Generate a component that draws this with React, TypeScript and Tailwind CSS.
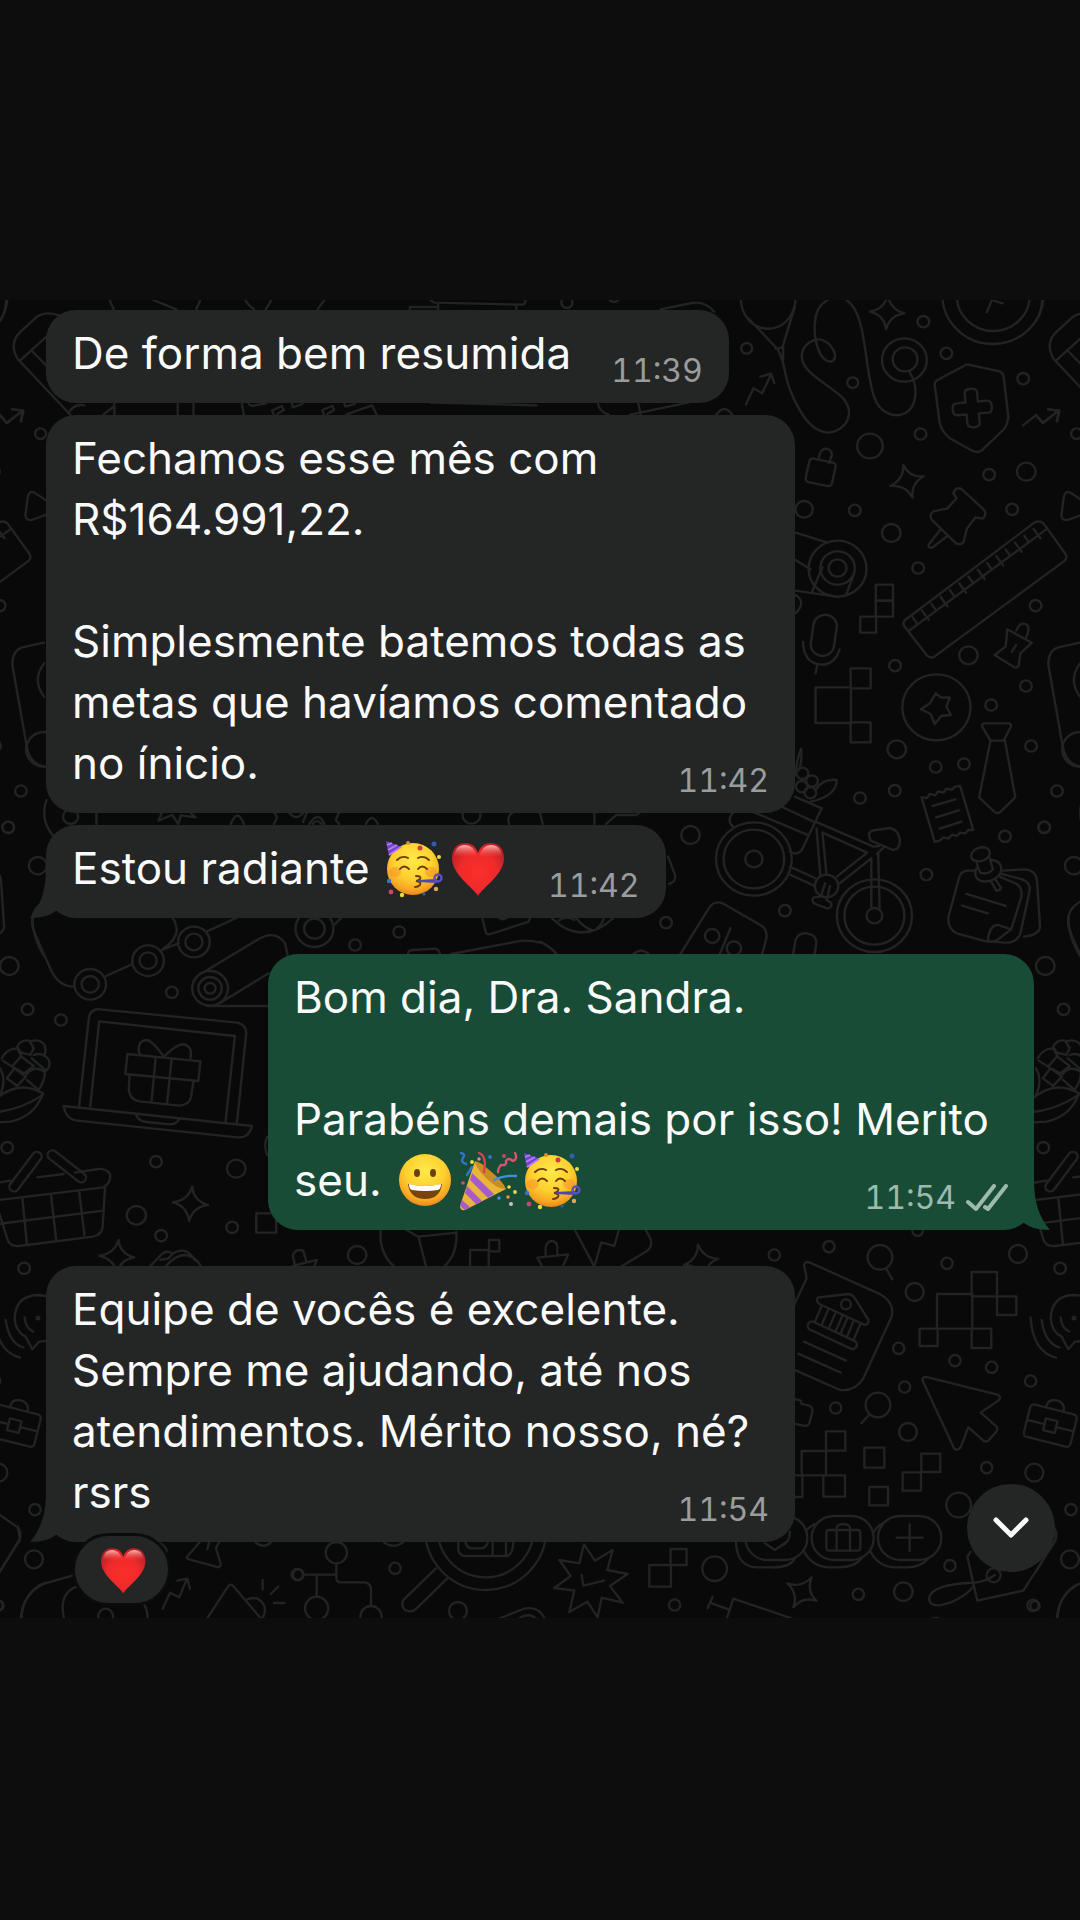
import React, { useId } from "react";

type Circle = [number, number, number];
type Box = [number, number, number, number];

/* ---------- wallpaper ---------- */

function Sparkle({ points }: { points: [number, number][] }) {
  const cx = points.reduce((s, p) => s + p[0], 0) / 4;
  const cy = points.reduce((s, p) => s + p[1], 0) / 4;
  const d = points
    .map((p, i) => {
      const n = points[(i + 1) % 4];
      const mx = ((p[0] + n[0]) / 2 + cx * 2) / 3;
      const my = ((p[1] + n[1]) / 2 + cy * 2) / 3;
      return (i === 0 ? `M${p[0]} ${p[1]} ` : "") + `Q${mx} ${my} ${n[0]} ${n[1]}`;
    })
    .join(" ");
  return <path d={d + "Z"} />;
}

function Patch({
  at,
  scale,
  circles = [],
  boxes = [],
  paths = [],
  children,
}: {
  at: string;
  scale: string;
  circles?: Circle[];
  boxes?: Box[];
  paths?: string[];
  children?: React.ReactNode;
}) {
  return (
    <g transform={`translate(${at}) scale(${scale})`}>
      {circles.map(([x, y, r], i) => (
        <circle key={i} cx={x} cy={y} r={r} />
      ))}
      {boxes.map(([x, y, w, h], i) => (
        <rect key={i} x={x} y={y} width={w} height={h} />
      ))}
      {paths.map((d, i) => (
        <path key={i} d={d} />
      ))}
      {children}
    </g>
  );
}

const WIDE = "0.3444 0.3333";
const NORMAL = "0.3333 0.3333";

function Doodles() {
  const ticks = Array.from({ length: 14 }, (_, i) => {
    const x = 1082 + i * 27;
    const y = 1012 - i * 20.4;
    return `M${x} ${y} l${i % 2 ? 20 : 13} ${i % 2 ? 28 : 19}`;
  });
  return (
    <g id="doodles">
      {/* eraser, keyboard, play button */}
      <Patch
        at="0 280"
        scale={WIDE}
        paths={[
          "M18 60 Q16 100 0 122",
          "M52 238 Q24 190 60 155 L105 112 Q130 92 172 106 M52 238 L205 405 M58 242 L140 165 M90 210 L140 262",
          "M318 60 L330 88 M445 60 L512 88 M582 60 L570 88 M712 60 Q722 78 738 88 M788 60 L772 88 M942 60 L922 88",
          "M1190 88 V81 H1270 M1250 60 L1262 68 L1515 74 Q1526 74 1526 60 M1272 70 V88 M1498 76 L1500 88",
          "M198 400 Q215 370 245 376 M300 404 L332 378 M332 370 V404 M516 370 V404 M562 370 V404 M702 370 L708 404",
          "M722 370 Q726 380 740 376 L772 370 M795 404 L790 392 L818 378 L824 390 L805 402 M848 370 L850 382 L878 372 M940 404 L936 390 L965 378 L970 390 L950 402 M1000 372 L1003 380 L1030 372",
          "M1005 404 L1080 376 L1094 404 M1250 368 L1558 376",
          "M0 404 L20 428 L66 392 M36 388 L68 392 L62 424",
          "M135 662 L100 638 Q84 630 80 655 L74 705 Q74 722 92 720 L135 704",
        ]}
      />
      {/* stethoscope, clock, shield, pushpin, ruler */}
      <Patch
        at="540 280"
        scale={WIDE}
        circles={[
          [78, 68, 16], [215, 50, 16], [600, 205, 16], [1113, 125, 17], [1180, 220, 17], [908, 308, 16],
          [1403, 296, 17], [1105, 462, 17], [958, 498, 37], [1304, 584, 17], [1412, 575, 27], [767, 688, 25],
          [914, 691, 17], [1371, 688, 17], [1020, 759, 27], [1098, 864, 17], [1439, 977, 17], [1558, 461, 16],
          [1058, 240, 65], [1060, 238, 36], [1315, 45, 147], [1316, 47, 106], [864, 866, 84], [864, 864, 50],
          [864, 864, 26],
        ]}
        boxes={[[975, 914, 50, 48], [975, 962, 50, 48], [930, 1010, 46, 48]]}
        paths={[
          "M350 88 L440 69 Q480 62 505 95 M168 370 Q172 395 200 404 M285 368 L292 402 M262 404 L430 368 M512 404 Q535 370 558 404",
          "M598 373 L620 325 L645 340 L670 285 M640 290 L671 281 L680 309",
          "M583 60 C590 170 730 180 742 60 M605 115 L690 208 M740 80 L706 195 V240 M683 205 Q697 208 706 198",
          "M690 208 C720 260 700 300 760 400 C790 450 830 470 865 450 C905 425 905 385 880 355 C850 320 760 280 760 230 C760 190 800 170 825 182 C850 195 870 235 845 245 C810 245 795 180 798 130 Q800 80 835 60 M890 60 C950 100 940 260 970 350 C985 400 1030 415 1060 400 C1095 380 1100 320 1073 276",
          "M1297 97 L1312 60 L1343 70",
          "M1244 254 L1335 274 Q1345 280 1346 290 L1360 410 Q1358 435 1345 450 L1282 512 Q1270 520 1255 512 L1190 475 Q1165 455 1160 425 L1146 315 Q1146 302 1158 298 L1232 257 Q1240 252 1244 254",
          "M1402 436 L1440 406 L1460 430 L1506 392 M1475 388 L1507 392 L1500 424",
          "M808 540 L812 522 Q820 503 835 507 Q850 512 847 527 L840 549",
          "M1200 640 Q1208 618 1225 628 L1290 690 Q1298 705 1285 716 L1265 712 L1240 745 L1230 785 Q1222 798 1208 790 L1138 720 Q1128 705 1142 694 L1182 686 L1210 655 Z",
          "M1163 748 L1128 795 Q1128 806 1140 802 L1183 768",
          "M1060 1020 Q1050 1030 1060 1042 L1125 1128 Q1135 1136 1145 1130 L1524 842 Q1532 832 1526 822 L1462 730 Q1450 720 1435 728 Z M1072 1052 L1470 748",
          "M742 758 L835 788 M742 840 L785 868 M742 932 L865 951 M820 862 L790 935 M912 880 L890 942 M742 945 Q775 965 742 1000",
          ...ticks,
        ]}
      >
        <Sparkle points={[[1010, 45], [1058, 100], [1005, 148], [958, 95]]} />
        <Sparkle points={[[1055, 555], [1114, 589], [1082, 653], [1017, 618]]} />
        <rect x="776" y="541" width="78" height="72" rx="10" transform="rotate(12 815 577)" />
        <path
          transform="translate(1255 384) rotate(-5)"
          d="M-18 -45 Q-18 -58 0 -58 Q18 -58 18 -45 V-18 H45 Q57 -18 57 0 Q57 18 45 18 H18 V45 Q18 58 0 58 Q-18 58 -18 45 V18 H-45 Q-57 18 -57 0 Q-57 -18 -45 -18 H-18 Z"
        />
      </Patch>
      {/* bicycle, tie, receipt, sticky notes */}
      <Patch
        at="540 600"
        scale={WIDE}
        circles={[
          [1244, 166, 27], [1031, 197, 17], [1411, 258, 17], [1310, 315, 17], [1036, 448, 27], [1426, 438, 17],
          [1149, 501, 17], [1231, 492, 17], [929, 594, 17], [1030, 572, 17], [1501, 573, 17], [1464, 682, 17],
          [1350, 709, 17], [437, 705, 27], [1122, 824, 17], [1550, 797, 26], [711, 932, 17], [366, 968, 17],
          [1151, 322, 99], [1568, 448, 52], [621, 777, 110], [621, 777, 88], [621, 777, 25], [971, 947, 109],
          [971, 947, 87], [971, 947, 23], [832, 858, 34], [762, 520, 17], [790, 543, 17], [760, 560, 17],
          [785, 578, 17], [500, 1008, 21], [563, 1045, 21],
        ]}
        boxes={[[902, 205, 58, 60], [800, 262, 103, 107], [902, 367, 58, 60]]}
        paths={[
          "M764 126 Q765 188 815 194 Q855 195 870 148 M805 195 L800 220",
          "M1357 88 L1428 128 L1395 160 L1390 198 Q1385 206 1375 200 L1320 165 L1352 140 Z M1383 92 Q1392 66 1410 72 Q1426 80 1412 112 M1370 155 L1382 136",
          "M1149 280 L1165 293 L1190 292 L1180 320 L1193 345 L1165 348 L1146 372 L1134 342 L1106 328 L1132 310 Z",
          "M1290 370 H1362 Q1370 372 1367 380 L1346 422 H1308 L1284 380 Q1282 372 1290 370 Z M1308 422 L1275 592 L1320 636 Q1328 642 1336 636 L1380 592 L1350 422",
          "M1568 128 L1505 142 Q1475 152 1476 195 L1518 440 Q1525 490 1568 500 M1568 190 Q1532 240 1568 290",
          "M1108 592 L1124 594 L1132 582 L1148 586 L1156 574 L1172 578 L1180 566 L1196 570 L1204 560 L1220 558 L1258 690 L1244 690 L1234 700 L1220 698 L1210 708 L1196 704 L1186 716 L1172 712 L1160 722 L1146 726 Z M1140 618 L1206 598 M1150 652 L1216 631 M1160 686 L1224 665",
          "M1262 812 H1240 Q1222 815 1218 830 L1186 950 Q1182 985 1210 1000 L1295 1024 Q1320 1028 1330 1018 L1368 988 L1398 890 Q1402 855 1370 846 L1335 830",
          "M1340 822 L1390 835 Q1430 845 1420 880 L1395 1000 Q1385 1030 1350 1028 L1300 1024 M1345 812 L1410 808 Q1440 812 1443 840 L1452 980 Q1450 1005 1405 1010 M1300 1022 Q1305 975 1330 975 Q1345 980 1368 988 M1238 882 L1352 918 M1226 917 L1300 940",
          "M1268 790 L1278 818 Q1300 826 1315 808 L1305 772 M1268 804 Q1255 835 1285 844 Q1320 848 1338 818 Q1345 785 1312 780 M1310 845 L1325 872 Q1338 872 1338 862 L1322 838",
          "M600 628 L780 706 M705 622 L800 668 M740 590 L818 625 L760 750 Q745 768 725 755 M562 636 Q540 660 560 680",
          "M800 665 L968 740 M820 698 L950 758 L862 830 M820 698 L832 825 M803 685 L814 828 M870 850 L962 775 M725 800 L800 835 M728 825 L798 858 M962 775 V925 M982 760 L986 925 M968 740 L985 738 M1000 740 L978 762",
          "M955 705 Q955 692 975 690 L1015 684 Q1040 688 1045 720 Q1045 750 1025 750 L960 722 Z",
          "M828 850 L815 890 L795 892 Q785 905 800 912 L835 926 Q850 922 845 908 L832 900 L842 858",
          "M800 570 Q820 535 862 540 Q860 590 785 605 M742 525 Q745 480 758 446 Q762 480 752 510",
          "M372 770 L392 825 Q396 845 375 852 M35 955 Q120 1040 212 955 M105 955 Q130 985 150 990 M55 962 Q75 945 100 960 M185 955 Q180 975 165 985",
          "M408 1062 L490 925 Q505 900 530 910 L640 975 Q665 990 655 1025 L645 1062 M553 985 L522 1062",
          "M735 1062 L742 1020 Q750 998 775 1000 Q805 1005 802 1030 L798 1062 M272 1062 Q293 1042 315 1062 M0 1025 Q30 1040 48 1062",
          "M1568 905 Q1525 930 1535 980 Q1545 1030 1568 1068 M158 636 V672 M0 640 L8 672 M192 672 L222 645 H280 L292 636",
        ]}
      >
        <rect x="790" y="44" width="68" height="124" rx="34" transform="rotate(8 824 106)" />
        <ellipse cx="1279" cy="763" rx="28" ry="20" transform="rotate(-20 1279 763)" />
      </Patch>
      {/* skateboard, laptop with gift, corn */}
      <Patch
        at="0 800"
        scale={WIDE}
        circles={[
          [205, 50, 22], [24, 82, 17], [27, 498, 27], [80, 628, 17], [177, 660, 17], [499, 577, 17],
          [1031, 435, 17], [1159, 396, 17], [21, 1043, 17], [262, 553, 46], [262, 553, 25], [430, 482, 46],
          [430, 482, 25], [563, 426, 46], [563, 426, 25], [913, 386, 55], [913, 386, 30], [610, 565, 52],
          [610, 565, 34], [610, 565, 16], [1369, 45, 26],
        ]}
        paths={[
          "M135 0 Q115 60 155 108 M280 36 V72 M470 38 L460 62 L500 45 L518 72 L525 46 L568 52 L552 38",
          "M670 72 Q690 22 708 72 M795 36 L805 52 L795 72 M840 38 Q860 64 880 38 M898 72 Q925 30 942 72 M908 72 Q920 55 934 72 M890 40 L880 66 M985 36 L975 60 L985 72 M1062 72 Q1080 36 1097 72 M1478 72 Q1470 50 1490 36",
          "M95 352 Q92 380 105 410 L148 510 Q170 560 216 560 M308 528 L385 492 M470 450 L518 430 M470 450 Q520 415 512 380 Q510 365 500 352 M600 395 L690 352 M970 375 L992 352",
          "M596 514 L755 415 Q800 390 828 430 L835 465 M640 608 L780 520 M600 618 H776",
          "M1400 352 L1410 395 Q1412 405 1425 402 L1535 365 L1540 352 M1445 352 L1460 358 L1475 352 M1185 460 Q1185 452 1200 450 L1265 446 Q1275 450 1277 460 M1310 462 L1500 425 Q1530 418 1568 428",
          "M230 918 L258 655 Q262 625 290 628 L690 668 Q715 675 715 700 L688 968 M262 920 L288 664 L682 708 L655 964",
          "M185 918 L732 978 Q722 1015 690 1012 L225 962 Q190 958 185 918 Z M395 945 Q405 965 425 966 L495 973 Q512 972 520 958",
          "M370 762 L582 784 L576 843 L364 822 Z M452 772 L440 905 M498 778 L485 912 M376 824 L374 870 Q378 900 405 904 L520 917 Q550 915 555 890 L562 842",
          "M476 770 Q440 720 425 720 Q400 722 403 755 L408 765 M476 770 Q515 730 535 733 Q560 740 553 775",
          "M50 740 Q60 718 85 722 L98 745 L88 765 L60 758 Z M88 725 Q110 715 128 732 Q136 750 128 768 M5 775 Q20 745 50 745 L62 768 L35 800 L8 782 M98 765 Q125 755 142 780 Q148 800 134 812 L92 775 M62 770 L98 798 L70 820 L35 800 M42 805 L75 830 L50 858 L20 835 Z M78 822 Q98 795 130 815 Q132 840 112 870 L78 840",
          "M-20 905 Q50 835 125 880 Q100 950 30 965 L-20 968 M-20 938 Q60 930 125 884 M0 805 Q20 840 0 885",
        ]}
      />
      {/* shopping basket */}
      <Patch
        at="0 1120"
        scale={WIDE}
        circles={[[453, 125, 17], [686, 146, 27], [396, 286, 28], [468, 347, 17], [674, 322, 17], [70, 445, 17], [1037, 405, 27]]}
        boxes={[[744, 280, 58, 58], [1365, 390, 54, 60], [1420, 360, 30, 34]]}
        paths={[
          "M-10 241 L300 202 Q322 190 320 165 Q312 145 285 147 L218 158 M108 172 L185 162 M-10 189 L30 182",
          "M305 202 L298 320 Q296 345 270 350 L55 378 Q30 380 22 360 L-5 270 M65 235 L78 370 M148 225 L163 358 M230 215 L245 345 M-5 312 L300 272",
          "M435 440 L470 402 Q485 390 500 400 L490 415 L465 420 M480 440 Q540 370 585 440 M500 402 Q540 375 565 420",
          "M855 430 L850 405 Q860 385 880 392 L890 425 M850 438 L920 420 L912 440",
          "M1105 330 Q1100 400 1145 440 M1325 335 Q1330 400 1290 440 M1215 350 L1325 338 M1215 350 L1180 330 M1215 350 L1237 440 M776 50 Q764 75 776 105",
        ]}
      >
        <rect x="-14" y="-70" width="28" height="140" rx="14" transform="translate(74 155) rotate(36)" />
        <rect x="-14" y="-68" width="28" height="136" rx="14" transform="translate(194 139) rotate(-51)" />
        <Sparkle points={[[558, 200], [604, 255], [549, 303], [502, 247]]} />
        <Sparkle points={[[344, 360], [390, 412], [340, 460], [288, 407]]} />
      </Patch>
      <Patch
        at="400 1215"
        scale={NORMAL}
        circles={[[1123, 120, 17]]}
        paths={[
          "M437 122 V98 Q440 78 456 78 Q472 80 472 98 V120 M412 128 L505 118 L486 160 M412 128 L430 160",
          "M522 40 L583 155 L604 82 L643 93 L658 40 M735 40 L752 72 Q760 98 735 112 L655 160",
        ]}
      >
        <Sparkle points={[[894, 88], [955, 131], [915, 190], [852, 150]]} />
      </Patch>
      {/* bank card, pixels, cursor, briefcase */}
      <Patch
        at="780 1140"
        scale={NORMAL}
        circles={[
          [147, 320, 17], [413, 272, 16], [300, 352, 37], [501, 370, 17], [404, 456, 27], [714, 342, 27],
          [356, 625, 17], [525, 662, 17], [635, 682, 17], [752, 723, 17], [374, 741, 17], [167, 804, 17],
          [294, 795, 37], [384, 876, 27], [198, 493, 15], [882, 534, 4],
        ]}
        boxes={[[471, 462, 106, 104], [575, 396, 76, 73], [651, 469, 58, 56], [419, 566, 54, 52], [575, 566, 59, 58]]}
        paths={[
          "M318 385 L337 418 M268 824 L244 850",
          "M40 500 L80 415 L72 375 Q75 362 90 368 L295 460 Q345 485 335 530 L250 715 Q225 755 180 750 L40 688",
          "M115 472 L205 462 Q215 462 225 475 L265 540 Q268 552 255 555 L118 492 Q105 482 115 472Z",
          "M125 498 L105 545 M145 508 L125 555 M168 515 L148 562 M188 525 L168 572 M203 532 L182 580 M222 540 L202 588 M242 550 L222 597",
          "M72 605 L198 662 M55 641 L182 698",
          "M438 711 L655 765 Q665 772 655 782 L602 818 L650 860 Q655 868 648 876 L625 902 Q615 908 608 900 L565 862 L542 922 Q532 935 522 925 L428 722 Q426 710 438 711 Z",
          "M752 532 Q758 635 828 653 M785 540 Q795 610 838 622 M842 532 Q845 565 868 575 M945 500 Q925 465 880 465 Q815 468 812 535 Q815 575 845 590 L865 628 L885 605 L920 602",
          "M40 776 L62 782 L65 792 L90 798 Q98 802 97 815 L88 850 Q82 860 70 857 L40 850",
        ]}
      >
        <rect x="-80" y="-13" width="160" height="26" rx="13" transform="translate(157 586) rotate(25)" />
        <g transform="translate(811 857) rotate(14)">
          <rect x="-72" y="-50" width="144" height="100" rx="12" />
          <path d="M-26 -50 Q-26 -78 0 -78 Q28 -78 28 -50 M-72 0 H-18 M18 0 H72" />
          <rect x="-18" y="-18" width="36" height="36" />
        </g>
      </Patch>
      {/* option pills, price tag */}
      <Patch
        at="780 1380"
        scale={NORMAL}
        circles={[
          [620, 263, 17], [763, 278, 27], [536, 375, 37], [873, 389, 17], [870, 538, 27], [510, 557, 17],
          [235, 643, 17], [370, 635, 28], [759, 676, 17], [641, 586, 21],
        ]}
        boxes={[
          [65, 213, 73, 73], [138, 154, 58, 58], [130, 286, 65, 64], [20, 286, 47, 65], [253, 203, 60, 60],
          [268, 321, 56, 55], [368, 277, 55, 55], [424, 221, 57, 55],
        ]}
        paths={[
          "M272 515 Q295 562 350 562 H380 Q425 562 445 535 M282 455 Q295 435 308 430 M70 510 Q95 562 150 562 H175 Q225 562 245 535 M80 450 Q90 440 104 432 M-20 562 Q30 562 45 535",
          "M350 473 H428 M389 433 V513 M170 512 V450 Q168 432 190 432 Q212 432 210 450 V512 M0 500 Q30 490 30 455",
          "M572 515 L562 530 L592 662 L730 632 L828 480 L822 440 M645 585 C600 620 560 600 490 620 C430 640 440 680 480 676 C520 670 560 645 580 620",
          "M830 720 Q835 640 905 608 M450 720 Q468 708 486 720",
        ]}
      >
        <rect x="294" y="408" width="190" height="132" rx="66" />
        <rect x="95" y="408" width="186" height="132" rx="66" />
        <rect x="-104" y="408" width="186" height="132" rx="66" />
        <rect x="139" y="450" width="102" height="62" rx="8" />
        <Sparkle points={[[95, 592], [110, 663], [40, 682], [22, 610]]} />
      </Patch>
      <Patch
        at="0 1480"
        scale={NORMAL}
        circles={[[-3, 377, 14], [317, 408, 22], [892, 284, 17]]}
        paths={[
          "M0 105 L50 140 Q65 150 60 175 L0 275 M65 416 Q65 350 120 315 L225 285 M192 416 Q175 340 230 320 M432 372 Q445 395 442 416",
          "M488 386 L510 338 L538 352 L560 298 M532 302 L562 296 L570 326 M600 185 L560 232 Q562 238 568 238 L655 262 Q662 260 662 250 L648 205 L658 185 M622 208 L628 185",
          "M620 418 L685 318 Q692 310 700 318 L785 418 M742 358 Q775 345 792 375 Q800 400 785 418 M788 300 V328 M835 320 L812 342 M822 369 H854 M765 185 Q790 210 815 185 M480 190 Q500 200 500 215",
        ]}
      />
      {/* org chart, magnifier, burst */}
      <Patch
        at="300 1500"
        scale={NORMAL}
        circles={[
          [109, 158, 32], [50, 325, 35], [213, 350, 32], [285, 205, 17], [-5, 224, 16], [474, 333, 27],
          [1244, 206, 37], [1124, 315, 17], [557, 88, 182], [557, 88, 144],
        ]}
        boxes={[[1048, 195, 65, 65], [1112, 147, 48, 48]]}
        paths={[
          "M109 190 V235 Q110 247 122 247 H195 Q213 250 213 270 V318 M12 224 H109 M50 228 V290 M250 125 Q280 150 312 125",
          "M408 205 L312 298 Q300 315 315 330 Q335 340 350 325 L442 235 M475 120 V150 Q478 168 498 168 H620 Q640 165 640 120 M578 120 V168 M618 120 V168 M495 120 Q498 145 515 145 H545 Q562 142 565 120",
          "M595 357 L670 327 Q715 315 735 357 M655 357 Q685 335 710 357",
          "M852 133 L885 182 L938 150 L922 210 L983 222 L930 258 L968 308 L905 293 L893 352 L862 305 L808 336 L823 272 L763 264 L812 228 L778 180 L838 190 Z M845 225 L850 257 L912 242",
          "M1308 125 Q1310 202 1375 202 H1430 M1395 130 L1425 150 L1460 125 M1238 290 L1223 325 M1230 308 L1285 328 M1280 357 L1300 296 L1475 355",
        ]}
      />
    </g>
  );
}

function Wallpaper() {
  return (
    <svg
      aria-hidden="true"
      className="absolute inset-0 h-full w-full"
      viewBox="0 300 1080 1319"
      preserveAspectRatio="xMidYMin slice"
      fill="none"
      stroke="#222323"
      strokeWidth="7"
      strokeLinecap="round"
      strokeLinejoin="round"
    >
      <Doodles />
      <use href="#doodles" x="-1036" />
      <use href="#doodles" x="1036" />
    </svg>
  );
}

/* ---------- emoji ---------- */

const EMOJI = "inline-block h-[61px] w-[63px] align-top";

function FaceGradient({ id }: { id: string }) {
  return (
    <radialGradient id={id} cx="0.5" cy="0.32" r="0.68">
      <stop offset="0" stopColor="#ffe94a" />
      <stop offset="0.55" stopColor="#fdd02f" />
      <stop offset="0.85" stopColor="#f7a823" />
      <stop offset="1" stopColor="#e8861c" />
    </radialGradient>
  );
}

function PartyFace() {
  const id = useId();
  return (
    <svg role="img" aria-label="🥳" viewBox="0 0 63 61" className={EMOJI}>
      <defs>
        <FaceGradient id={id} />
      </defs>
      <circle cx="31" cy="31" r="26" fill={`url(#${id})`} />
      <ellipse cx="13" cy="34" rx="6" ry="5" fill="#f58a2a" opacity="0.45" />
      <ellipse cx="49" cy="34" rx="6" ry="5" fill="#f58a2a" opacity="0.45" />
      <path d="M4 3 L20 9 Q12 12 7 18 Z" fill="#6d45d8" />
      <path d="M5 7 L10 5 M6 12 L15 7 M7 17 L19 9" stroke="#c37bea" strokeWidth="1.8" />
      <g fill="none" stroke="#6b3a0c" strokeWidth="1.9" strokeLinecap="round">
        <path d="M15 22 Q20 17 26 20" />
        <path d="M36 20 Q42 17 47 22" />
        <path d="M18 31 Q22 26 27 31" />
        <path d="M36 31 Q40 26 45 31" />
        <path d="M34 38 Q40 38 38 41 Q36 43 34 43 Q40 44 38 47 Q36 49 33 49" />
      </g>
      <path d="M36 42 L55 41 V45 L36 44 Z" fill="#4d46b5" />
      <circle cx="56" cy="40" r="3.5" fill="none" stroke="#5a4fc4" strokeWidth="2.4" />
      <circle cx="38" cy="10" r="2.5" fill="#d33a3e" />
      <circle cx="52" cy="6" r="2.5" fill="#2f5fae" />
      <circle cx="26" cy="5" r="1.9" fill="#e58b2c" />
      <circle cx="57" cy="19" r="2" fill="#e8e04a" />
      <circle cx="7" cy="43" r="2.2" fill="#3572c8" />
      <circle cx="9" cy="54" r="2.4" fill="#c9456f" />
      <circle cx="20" cy="57" r="2.2" fill="#e6dc3f" />
      <circle cx="54" cy="51" r="2.2" fill="#e5a65a" />
      <circle cx="42" cy="56" r="1.5" fill="#3b5aa8" />
    </svg>
  );
}

function GrinFace() {
  const id = useId();
  return (
    <svg role="img" aria-label="😀" viewBox="0 0 63 61" className={EMOJI}>
      <defs>
        <FaceGradient id={id} />
      </defs>
      <circle cx="31" cy="30" r="26" fill={`url(#${id})`} />
      <ellipse cx="23" cy="23" rx="3" ry="4" fill="#6b3f10" />
      <ellipse cx="39" cy="23" rx="3" ry="4" fill="#6b3f10" />
      <path d="M14 34 Q31 38 48 34 Q46 49 31 49 Q16 49 14 34 Z" fill="#7a430d" />
      <path d="M15 34 Q31 38 47 34 Q47 39 44 40 Q31 42 18 40 Q15 39 15 34 Z" fill="#ffffff" />
    </svg>
  );
}

function PartyPopper() {
  return (
    <svg role="img" aria-label="🎉" viewBox="0 0 63 61" className={EMOJI}>
      <path d="M18 11 L49 39 L8 60 Q3 61 3 56 Z" fill="#e9b53a" />
      <path d="M18 11 Q24 12 31 19 Q46 31 49 39 Q41 40 28 27 Q18 17 18 11 Z" fill="#c98d20" />
      <path d="M15 23 L37 44 L31 48 L13 30 Z M10 36 L25 51 L19 54 L8 43 Z M5 50 L13 57 L8 60 L3 56 Z" fill="#a55bc9" />
      <g fill="none" strokeLinecap="round" strokeWidth="2.4">
        <path d="M4 3 Q9 4 6 8 Q3 12 9 14 M15 17 L10 25" stroke="#2f74cf" />
        <path d="M22 3 Q30 6 27 22" stroke="#dd3f58" />
        <path d="M58 3 Q61 9 56 11 Q51 7 49 11 Q50 16 44 15 Q41 18 41 22" stroke="#dc5271" />
        <path d="M37 30 Q47 25 59 26" stroke="#3e8fe0" />
      </g>
      <circle cx="15" cy="12" r="1.9" fill="#e9e23f" />
      <circle cx="22" cy="9" r="1.7" fill="#e58a9c" />
      <circle cx="33" cy="7" r="1.9" fill="#3377cc" />
      <circle cx="47" cy="6" r="1.9" fill="#cf4569" />
      <circle cx="6" cy="33" r="1.8" fill="#d9515f" />
      <circle cx="52" cy="37" r="1.8" fill="#e9e23f" />
      <circle cx="58" cy="42" r="1.9" fill="#e7d94a" />
      <circle cx="42" cy="48" r="1.8" fill="#3e8fe0" />
      <circle cx="51" cy="47" r="1.8" fill="#e5944a" />
      <circle cx="54" cy="54" r="2" fill="#dcb5da" />
    </svg>
  );
}

function Heart({ className = EMOJI }: { className?: string }) {
  const id = useId();
  return (
    <svg role="img" aria-label="❤️" viewBox="0 0 63 61" className={className}>
      <defs>
        <radialGradient id={id} cx="0.5" cy="0.55" r="0.6">
          <stop offset="0" stopColor="#fb2f2a" />
          <stop offset="0.6" stopColor="#ee2a2b" />
          <stop offset="1" stopColor="#b81f28" />
        </radialGradient>
        <linearGradient id={id + "s"} x1="0" y1="0" x2="0" y2="1">
          <stop offset="0" stopColor="#ffc4bc" stopOpacity="0.95" />
          <stop offset="1" stopColor="#ff5a50" stopOpacity="0" />
        </linearGradient>
      </defs>
      <path
        d="M33 58 C28 49 7 37 7 20 C7 10 13 5 20 5 C27 5 31 9 33 15 C35 9 39 5 46 5 C53 5 59 10 59 20 C59 37 38 49 33 58 Z"
        fill={`url(#${id})`}
      />
      <path d="M9 19 Q10 7 20 7 Q29 7 32 19 Z" fill={`url(#${id}s)`} />
      <path d="M34 19 Q37 7 46 7 Q56 7 57 19 Z" fill={`url(#${id}s)`} />
    </svg>
  );
}

/* ---------- messages ---------- */

function Tail({ mine }: { mine?: boolean }) {
  return (
    <svg
      aria-hidden="true"
      viewBox="0 0 34 50"
      className={
        mine
          ? "absolute -right-4 bottom-0 h-[50px] w-[34px] -scale-x-100 fill-[#184c37]"
          : "absolute bottom-0 -left-4 h-[50px] w-[34px] fill-[#242626]"
      }
    >
      <path d="M16 0 C16 22 11 37 0 50 C12 50 22 47 27 42 L34 30 V0 Z" />
    </svg>
  );
}

function Ticks() {
  return (
    <svg
      role="img"
      aria-label="Entregue"
      viewBox="0 0 42 28"
      className="h-7 w-[42px] fill-none stroke-[#9dbaac]"
      strokeWidth="4"
      strokeLinecap="round"
      strokeLinejoin="round"
    >
      <path d="M2 18 L10 25 L28 2 M19 23 L22 25 L40 2" />
    </svg>
  );
}

function Message({
  time,
  mine,
  tail,
  className = "",
  reaction,
  children,
}: {
  time: string;
  mine?: boolean;
  tail?: boolean;
  className?: string;
  reaction?: React.ReactNode;
  children: React.ReactNode;
}) {
  return (
    <li
      className={`relative rounded-[30px] px-[26px] pt-[13px] pb-3 ${
        mine ? "self-end bg-[#184c37]" : "self-start bg-[#242626]"
      } ${className}`}
    >
      {tail && <Tail mine={mine} />}
      <div className="relative flow-root text-[44px] leading-[61px] whitespace-pre-line text-[#fafafa]">
        {children}
        <span
          className={`float-right mt-7 ml-10 flex items-center gap-2.5 text-[32px] leading-10 tabular-nums ${
            mine ? "text-[#9dbaac]" : "text-[#9b9c9c]"
          }`}
        >
          <time>{time}</time>
          {mine && <Ticks />}
        </span>
      </div>
      {reaction}
    </li>
  );
}

export default function App() {
  return (
    <main className="min-h-screen bg-[#0d0d0d] pt-[300px] font-['Inter','Liberation_Sans',sans-serif]">
      <section aria-label="Conversa" className="relative overflow-hidden bg-[#090909]">
        <Wallpaper />
        <ul className="relative flex flex-col pt-2.5 pr-[46px] pb-[76px] pl-[46px]">
          <Message time="11:39">De forma bem resumida</Message>
          <Message time="11:42" className="mt-3 max-w-[749px]">
            {"Fechamos esse mês com R$164.991,22.\n\nSimplesmente batemos todas as metas que havíamos comentado no ínicio."}
          </Message>
          <Message time="11:42" tail className="mt-3">
            Estou radiante <PartyFace />
            <Heart />
          </Message>
          <Message time="11:54" mine tail className="mt-9 max-w-[766px]">
            {"Bom dia, Dra. Sandra.\n\nParabéns demais por isso! Merito seu. "}
            <GrinFace />
            <PartyPopper />
            <PartyFace />
          </Message>
          <Message
            time="11:54"
            tail
            className="mt-9 max-w-[749px]"
            reaction={
              <button
                type="button"
                aria-label="Reação"
                className="absolute -bottom-16 left-[26px] flex h-[73px] w-[99px] items-center justify-center rounded-full border-3 border-[#0b0b0b] bg-[#242626]"
              >
                <Heart className="h-[52px] w-[54px]" />
              </button>
            }
          >
            Equipe de vocês é excelente. Sempre me ajudando, até nos atendimentos. Mérito nosso, né? rsrs
          </Message>
        </ul>
        <button
          type="button"
          aria-label="Ir para o fim"
          className="absolute right-[25px] bottom-[46px] flex size-[88px] items-center justify-center rounded-full bg-[#242626]"
        >
          <svg
            aria-hidden="true"
            viewBox="0 0 36 22"
            className="h-[22px] w-9 fill-none stroke-[#fafafa]"
            strokeWidth="5"
            strokeLinecap="round"
            strokeLinejoin="round"
          >
            <path d="M3 3 L18 18 L33 3" />
          </svg>
        </button>
      </section>
    </main>
  );
}
